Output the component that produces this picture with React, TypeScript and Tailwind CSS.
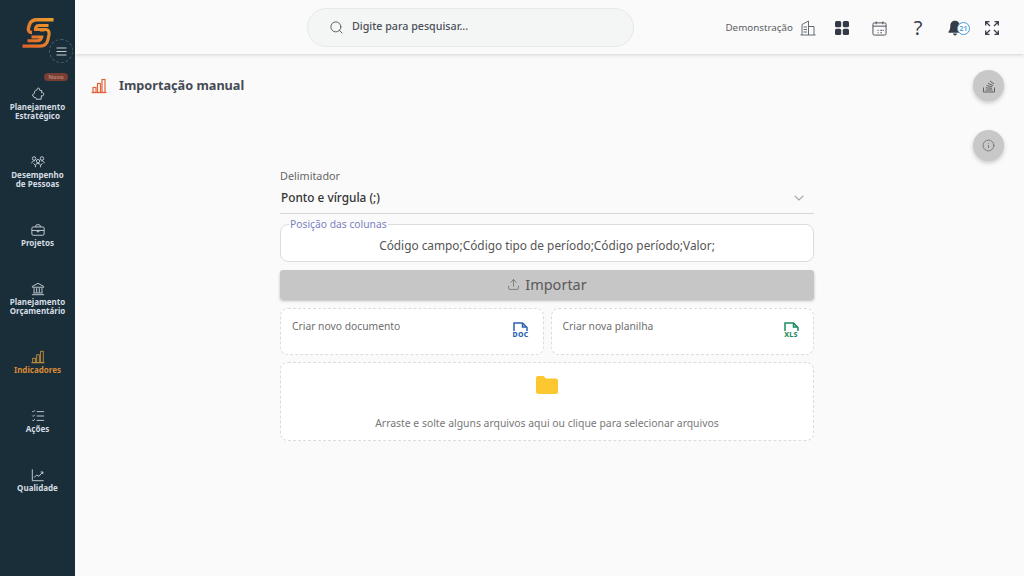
import { Search, ChevronDown, Upload, Info } from "lucide-react";

const font = "font-['Noto_Sans',sans-serif]";

function Logo() {
  return (
    <svg width="32" height="30" viewBox="0 0 32 30" fill="none">
      <defs>
        <linearGradient id="lg" x1="0" y1="30" x2="32" y2="0" gradientUnits="userSpaceOnUse">
          <stop offset="0" stopColor="#dd5f2a" />
          <stop offset="1" stopColor="#efa02e" />
        </linearGradient>
      </defs>
      <g stroke="url(#lg)">
        <path d="M31.500 1.800H15C10.500 1.800 8.500 3.500 7.500 6.500L6.500 10C5.800 12.800 7 14.500 10 14.500" strokeWidth="3.400" />
        <path d="M26.500 7.500H17C14.500 7.500 13.500 9 13.500 11.500H24C26 11.500 27.500 13.500 27 16.500L26 21.500C25 26 22.500 28.200 18 28.200H.5" strokeWidth="3.200" />
        <path d="M18 12.500H22.500" strokeWidth="2" />
        <path d="M5.500 22.800H15.500C18 22.800 19.300 21.500 19.800 19H9.500" strokeWidth="3" />
      </g>
    </svg>
  );
}

type IconProps = { c?: string };
const base = (c: string) => ({ width: 14, height: 14, viewBox: "0 0 16 16", fill: "none", stroke: c, strokeWidth: 1 });

const Puzzle = ({ c = "#d5dde2" }: IconProps) => (
  <svg {...base(c)}><path d="M7 3C6.500 1 9.500 .5 9.800 2.500L9.500 3.500L12.500 4.200L12 6.500C13.800 6 15 7.500 14.500 9C14 10.300 12.800 10.300 12 9.800L11.500 14H6C6.300 12.500 5 11.500 3.500 12L1.500 9L4.200 7C3.500 5.800 4 4.300 5.500 4Z" /></svg>
);
const People = ({ c = "#d5dde2" }: IconProps) => (
  <svg {...base(c)}><circle cx="3.500" cy="4" r="2" /><circle cx="12.500" cy="4" r="2" /><circle cx="8" cy="7" r="1.900" /><path d="M.8 9.500C1 7.500 2.500 6.500 4.500 6.500M15.200 9.500C15 7.500 13.500 6.500 11.500 6.500M5 14C5 11 6 9.500 8 9.500C10 9.500 11 11 11 14M3 9.500L5 12M13 9.500L11 12" /></svg>
);
const Briefcase = ({ c = "#d5dde2" }: IconProps) => (
  <svg {...base(c)}><rect x="1" y="4.500" width="14" height="9.500" rx="1.500" /><path d="M5.500 4.500V3C5.500 2.500 6 2 6.500 2H9.500C10 2 10.500 2.500 10.500 3V4.500M1 8.500H15M7 8.500V10H9V8.500" /></svg>
);
const Bank = ({ c = "#d5dde2" }: IconProps) => (
  <svg {...base(c)}><path d="M8 1.500L14.500 5V6H1.500V5ZM3.500 7V12M6.500 7V12M9.500 7V12M12.500 7V12M2.500 12.500H13.500M1 14.500H15" /></svg>
);
const Bars = ({ c = "#d5dde2", w = 1, s = 14 }: IconProps & { w?: number; s?: number }) => (
  <svg width={s} height={s} viewBox="0 0 16 16" fill="none" stroke={c} strokeWidth={w}><path d="M.5 14.500H15.500" /><rect x="2" y="9.500" width="3" height="5" /><rect x="6.500" y="5.500" width="3" height="9" /><rect x="11" y="1.500" width="3" height="13" /></svg>
);
const Checklist = ({ c = "#d5dde2" }: IconProps) => (
  <svg {...base(c)}><path d="M6.500 3H15M6.500 8H15M6.500 13H15M1.500 2.500L2.500 3.500L4.500 1.500M1.500 7.500L2.500 8.500L4.500 6.500M1.500 12.500L2.500 13.500L4.500 11.500" /></svg>
);
const Chart = ({ c = "#d5dde2" }: IconProps) => (
  <svg {...base(c)}><path d="M1.500 1.500V14.500H14.500M3.500 11L6.500 8L9 9.500L13.500 4.500M11 4.500H13.500V7" /></svg>
);

const items = [
  { label: ["Planejamento", "Estratégico"], icon: <Puzzle />, badge: true },
  { label: ["Desempenho", "de Pessoas"], icon: <People /> },
  { label: ["Projetos"], icon: <Briefcase /> },
  { label: ["Planejamento", "Orçamentário"], icon: <Bank /> },
  { label: ["Indicadores"], icon: <Bars c="#c9913a" />, active: true },
  { label: ["Ações"], icon: <Checklist /> },
  { label: ["Qualidade"], icon: <Chart /> },
];

function Sidebar() {
  return (
    <aside className="relative w-[75px] shrink-0 bg-[#1a2e3a] flex flex-col items-center">
      <div className="mt-[18px] ml-[1px] h-[30px]">
        <Logo />
      </div>
      <div className="absolute left-[49px] top-[39px] w-[24px] h-[24px] rounded-full border border-dashed border-[#4a5c68] flex items-center justify-center z-10">
        <svg width="11" height="9" viewBox="0 0 11 9" fill="none" stroke="#c4ced4" strokeWidth="1"><path d="M.5 1H10.500M.5 4.500H10.500M.5 8H10.500" /></svg>
      </div>
      <nav className="mt-[39px] flex flex-col items-center gap-[35px] w-full">
        {items.map((it) => (
          <div key={it.label.join(" ")} className="relative flex flex-col items-center w-full">
            {it.badge && (
              <span className="absolute left-[44px] top-[-14px] w-[24px] h-[8px] rounded-full bg-[#7a3d31] text-[#b98a80] text-[6px] leading-[8px] text-center font-semibold">Novo</span>
            )}
            {it.icon}
            <div className={`mt-[1px] text-[8px] leading-[9px] font-bold text-center whitespace-nowrap ${it.active ? "text-[#d98a32]" : "text-[#d5dde2]"}`}>
              {it.label.map((l) => (
                <div key={l}>{l}</div>
              ))}
            </div>
          </div>
        ))}
      </nav>
    </aside>
  );
}

function Header() {
  return (
    <header className="h-[54px] shrink-0 bg-[#fafafa] shadow-[0_1px_4px_rgba(0,0,0,0.16)] flex items-center relative z-10">
      <div className="ml-[232px] mt-[1px] w-[327px] h-[39px] rounded-full bg-[#f4f6f5] border border-[#e6e9e8] flex items-center pl-[21px]">
        <Search size={15} strokeWidth={1.400} className="text-[#4a4f55]" />
        <span className="ml-[8px] text-[10.700px] font-medium text-[#4a4e58] relative top-[-1px]">Digite para pesquisar...</span>
      </div>
      <div className="ml-auto flex items-center text-[#3d4350] mt-[2px]">
        <span className="text-[9.800px] text-[#5a5f66]">Demonstração</span>
        <svg className="ml-[7px]" width="16" height="16" viewBox="0 0 16 16" fill="none" stroke="#565c66" strokeWidth="0.900"><path d="M.5 15H15.500M2 15V4.500L8.500 1V15M8.500 6.500H14V15M3.500 7H7M3.500 9.500H7M3.500 12H7" /></svg>
        <svg className="ml-[19px]" width="14" height="14" viewBox="0 0 14 14" fill="#333a47"><rect x="0" y="0" width="6.200" height="6.200" rx="1.500" /><rect x="7.800" y="0" width="6.200" height="6.200" rx="1.500" /><rect x="0" y="7.800" width="6.200" height="6.200" rx="1.500" /><rect x="7.800" y="7.800" width="6.200" height="6.200" rx="1.500" /></svg>
        <svg className="ml-[23px]" width="15" height="15" viewBox="0 0 16 16" fill="none" stroke="#444a55" strokeWidth="1"><rect x="1" y="2" width="14" height="13" rx="1.500" /><path d="M1 5.500H15M4.500 .5V3.500M11.500 .5V3.500" /><path d="M6 10H7M9 10H10.500M11.500 10H12.500M6 12.500H7M9 12.500H10.500" strokeWidth="1.200" /></svg>
        <span className="ml-[25px] w-[12px] text-[20px] leading-[20px] text-[#3a404c] text-center">?</span>
        <span className="relative ml-[24px] w-[22px] h-[16px]">
          <svg className="absolute left-0 top-0" width="14" height="16" viewBox="0 0 14 16" fill="#363c48"><path d="M7 .8C4 .8 2.300 3 2.300 6C2.300 9 1.500 10.500 .5 11.800V12.800H13.500V11.800C12.500 10.500 11.700 9 11.700 6C11.700 3 10 .8 7 .8ZM5 13.600C5.200 14.800 6 15.500 7 15.500C8 15.500 8.800 14.800 9 13.600Z" /></svg>
          <span className="absolute left-[9px] top-[2px] w-[13px] h-[13px] rounded-full bg-white border border-[#4a9ad8] text-[#4a9ad8] text-[7px] leading-[11px] text-center font-semibold">21</span>
        </span>
        <svg className="ml-[15px] mr-[25px]" width="14" height="14" viewBox="0 0 14 14" fill="none" stroke="#3a404c" strokeWidth="1.300"><path d="M.7 4.500V.7H4.500M.7 .7L5 5M9.500 .7H13.300V4.500M13.300 .7L9 5M.7 9.500V13.300H4.500M.7 13.300L5 9M13.300 9.500V13.300H9.500M13.300 13.300L9 9" /></svg>
      </div>
    </header>
  );
}

function FileIcon({ label, color }: { label: string; color: string }) {
  return (
    <div className="flex flex-col items-center w-[18px]">
      <svg width="15" height="9" viewBox="0 0 15 9" fill="none" stroke={color} strokeWidth="1.500"><path d="M1 9V1H9.500L14 5.500V9M9.500 1V5H14" /></svg>
      <span className="text-[7px] leading-[8px] font-extrabold tracking-[0.2px]" style={{ color }}>{label}</span>
    </div>
  );
}

function CreateCard({ title, icon }: { title: string; icon: React.ReactNode }) {
  return (
    <div className="flex-1 h-[47px] rounded-[8px] border border-dashed border-[#dcdcdc] bg-white flex justify-between pl-[11px] pr-[13px] pt-[10px]">
      <span className="text-[10.300px] leading-[14px] text-[#6e6e6e]">{title}</span>
      <div className="pt-[3px]">{icon}</div>
    </div>
  );
}

export default function App() {
  return (
    <div className={`flex w-[1024px] h-[576px] overflow-hidden bg-[#fafafa] ${font}`}>
      <Sidebar />
      <div className="flex-1 flex flex-col relative min-w-0">
        <Header />
        <main className="flex-1 relative">
          <div className="flex items-center pl-[16px] pt-[24px] h-[40px]">
            <Bars c="#e2633a" w={1.200} s={16} />
            <h1 className="ml-[12px] text-[12.700px] font-bold text-[#454a55]">Importação manual</h1>
          </div>
          <div className="absolute left-[898px] top-[16px] w-[31px] h-[31px] rounded-full bg-[#c8c8c8] shadow-[0_2px_4px_rgba(0,0,0,0.2)] flex items-center justify-center">
            <svg width="14" height="14" viewBox="0 0 14 14" fill="none" stroke="#555" strokeWidth="0.900"><path d="M1.500 8.500V13H12.500V8.500M3.500 11H10.500M3.800 8.800L10 9.300M4.500 6.500L10.200 7.800M6 4.300L11 6.500M8 2L12 5" /></svg>
          </div>
          <div className="absolute left-[898px] top-[76px] w-[31px] h-[31px] rounded-full bg-[#c8c8c8] shadow-[0_2px_4px_rgba(0,0,0,0.2)] flex items-center justify-center">
            <Info size={13} strokeWidth={1.200} className="text-[#555]" />
          </div>

          <div className="ml-[205px] mt-[75px] w-[534px] flex flex-col">
            <label className="text-[10.800px] leading-[14px] text-[#666]">Delimitador</label>
            <div className="h-[31px] border-b border-[#d6d6d6] flex items-center justify-between pl-[1px] pr-[7px]">
              <span className="text-[11.800px] font-medium text-[#333]">Ponto e vírgula (;)</span>
              <ChevronDown size={16} strokeWidth={1.600} className="text-[#aaa]" />
            </div>
            <fieldset className="mt-[4px] h-[44px] rounded-[8px] border border-[#dcdcdc] bg-white px-[8px] flex flex-col">
              <legend className="text-[10.300px] leading-[12px] text-[#7a80c0] px-[1px]">Posição das colunas</legend>
              <div className="text-center text-[11.850px] leading-[15px] mt-[8px] text-[#555]">Código campo;Código tipo de período;Código período;Valor;</div>
            </fieldset>
            <button className="mt-[8px] h-[29px] rounded-[3px] bg-[#c6c6c6] shadow-[0_2px_3px_rgba(0,0,0,0.25)] flex items-center justify-center gap-[5px] text-[14.500px] text-[#5a5a5a]">
              <Upload size={13} strokeWidth={1.200} />
              Importar
            </button>
            <div className="mt-[9px] flex gap-[7px]">
              <CreateCard title="Criar novo documento" icon={<FileIcon label="DOC" color="#2d63b0" />} />
              <CreateCard title="Criar nova planilha" icon={<FileIcon label="XLS" color="#1f8a5c" />} />
            </div>
            <div className="mt-[7px] h-[79px] rounded-[8px] border border-dashed border-[#dcdcdc] bg-white flex flex-col items-center pt-[13px]">
              <svg width="22" height="18" viewBox="0 0 22 18" fill="#fdc82f"><path d="M0 2C0 .9 .9 0 2 0H7.500L10 2.500H20C21.100 2.500 22 3.400 22 4.500V16C22 17.100 21.100 18 20 18H2C.9 18 0 17.100 0 16Z" /></svg>
              <span className="mt-[22px] text-[10.400px] leading-[14px] text-[#777]">Arraste e solte alguns arquivos aqui ou clique para selecionar arquivos</span>
            </div>
          </div>
        </main>
      </div>
    </div>
  );
}
